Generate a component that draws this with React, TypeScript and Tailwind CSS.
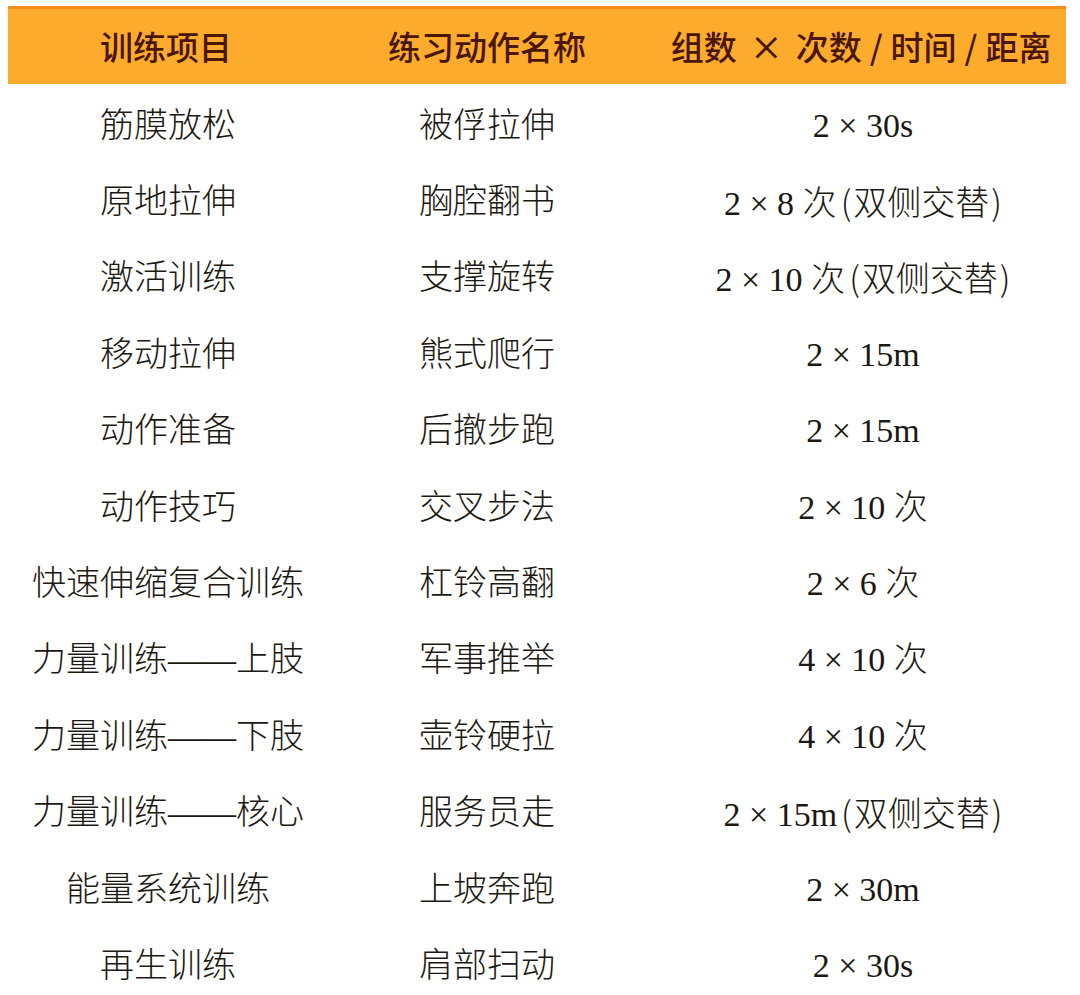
import React from "react";

const rows: [string, string, string, boolean?][] = [
  ["筋膜放松", "被俘拉伸", "2 × 30s"],
  ["原地拉伸", "胸腔翻书", "2 × 8 次", true],
  ["激活训练", "支撑旋转", "2 × 10 次", true],
  ["移动拉伸", "熊式爬行", "2 × 15m"],
  ["动作准备", "后撤步跑", "2 × 15m"],
  ["动作技巧", "交叉步法", "2 × 10 次"],
  ["快速伸缩复合训练", "杠铃高翻", "2 × 6 次"],
  ["力量训练——上肢", "军事推举", "4 × 10 次"],
  ["力量训练——下肢", "壶铃硬拉", "4 × 10 次"],
  ["力量训练——核心", "服务员走", "2 × 15m", true],
  ["能量系统训练", "上坡奔跑", "2 × 30m"],
  ["再生训练", "肩部扫动", "2 × 30s"],
];

export default function App() {
  return (
    <div className="w-[1080px] h-[995px] bg-white overflow-hidden">
      <div className="pt-[6px] px-[8px] w-[1074px]">
        <div className="border-t-[3px] border-[#f68b1f] bg-[#fdab2d] h-[78px] grid grid-cols-[314px_330px_422px] items-center text-[#4a1608] text-[33px] font-medium [font-family:'Noto_Sans_CJK_SC',sans-serif]">
          <div className="text-center pl-[2px]">训练项目</div>
          <div className="text-center">练习动作名称</div>
          <div className="text-center whitespace-nowrap pr-[4px]">
            组数<span className="px-[13px]">×</span>次数<span className="px-[8px]">/</span>时间<span className="px-[8px]">/</span>距离
          </div>
        </div>
        <div className="pt-[3px]">
          {rows.map((r, i) => (
            <div
              key={i}
              className="grid grid-cols-[314px_330px_422px] items-center h-[76.4px] text-[#1c1812] text-[34px] font-light [font-family:'Liberation_Serif','Noto_Sans_CJK_SC',serif]"
            >
              <div className="text-center whitespace-nowrap pl-[6px]">{r[0]}</div>
              <div className="text-center whitespace-nowrap">{r[1]}</div>
              <div className="text-center whitespace-nowrap">
                {r[2]}
                {r[3] ? (
                  <>
                    <span className="pl-[4px] pr-[2px] [font-family:'Noto_Sans_CJK_SC',sans-serif]">(</span>
                    双侧交替
                    <span className="pl-[2px] [font-family:'Noto_Sans_CJK_SC',sans-serif]">)</span>
                  </>
                ) : null}
              </div>
            </div>
          ))}
        </div>
      </div>
    </div>
  );
}
